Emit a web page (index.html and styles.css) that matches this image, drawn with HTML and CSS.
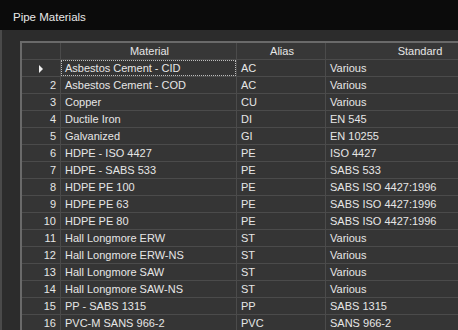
FILE: index.html
```html
<!DOCTYPE html>
<html lang="en">
<head>
    <meta charset="UTF-8">
    <title>Pipe Materials</title>
    <link rel="stylesheet" href="styles.css">
</head>
<body>
    <div class="window">
        <div class="titlebar">Pipe Materials</div>
        <div class="content">
            <table class="grid">
                <thead>
                    <tr>
                        <th class="rowhead"></th>
                        <th class="col-material">Material</th>
                        <th class="col-alias">Alias</th>
                        <th class="col-standard">Standard</th>
                    </tr>
                </thead>
                <tbody>
                    <tr class="current">
                        <td class="rowhead"><span class="arrow"></span></td>
                        <td class="cell-focus"><span class="focus">Asbestos Cement - CID</span></td>
                        <td>AC</td>
                        <td>Various</td>
                    </tr>
                    <tr><td class="rowhead">2</td><td>Asbestos Cement - COD</td><td>AC</td><td>Various</td></tr>
                    <tr><td class="rowhead">3</td><td>Copper</td><td>CU</td><td>Various</td></tr>
                    <tr><td class="rowhead">4</td><td>Ductile Iron</td><td>DI</td><td>EN 545</td></tr>
                    <tr><td class="rowhead">5</td><td>Galvanized</td><td>GI</td><td>EN 10255</td></tr>
                    <tr><td class="rowhead">6</td><td>HDPE - ISO 4427</td><td>PE</td><td>ISO 4427</td></tr>
                    <tr><td class="rowhead">7</td><td>HDPE - SABS 533</td><td>PE</td><td>SABS 533</td></tr>
                    <tr><td class="rowhead">8</td><td>HDPE PE 100</td><td>PE</td><td>SABS ISO 4427:1996</td></tr>
                    <tr><td class="rowhead">9</td><td>HDPE PE 63</td><td>PE</td><td>SABS ISO 4427:1996</td></tr>
                    <tr><td class="rowhead">10</td><td>HDPE PE 80</td><td>PE</td><td>SABS ISO 4427:1996</td></tr>
                    <tr><td class="rowhead">11</td><td>Hall Longmore ERW</td><td>ST</td><td>Various</td></tr>
                    <tr><td class="rowhead">12</td><td>Hall Longmore ERW-NS</td><td>ST</td><td>Various</td></tr>
                    <tr><td class="rowhead">13</td><td>Hall Longmore SAW</td><td>ST</td><td>Various</td></tr>
                    <tr><td class="rowhead">14</td><td>Hall Longmore SAW-NS</td><td>ST</td><td>Various</td></tr>
                    <tr><td class="rowhead">15</td><td>PP - SABS 1315</td><td>PP</td><td>SABS 1315</td></tr>
                    <tr><td class="rowhead">16</td><td>PVC-M SANS 966-2</td><td>PVC</td><td>SANS 966-2</td></tr>
                </tbody>
            </table>
        </div>
    </div>
</body>
</html>
```

FILE: styles.css
```css
/* Window */
body {
    margin: 0;
    padding: 0;
    background-color: #2b2b2b;
    font-family: 'Liberation Sans', Arial, sans-serif;
    overflow: hidden;
}

.window {
    width: 458px;
    height: 330px;
    display: flex;
    flex-direction: column;
}

.titlebar {
    height: 30px;
    box-sizing: border-box;
    background-color: #0b0b0b;
    color: #e8e8e8;
    font-size: 11.5px;
    line-height: 25px;
    padding: 5px 0 0 13px;
    flex-shrink: 0;
}

.content {
    flex: 1;
    background-color: #2c2c2c;
    border-left: 2px solid #4a4a4a;
    padding: 11px 0 0 18px;
    overflow: hidden;
}

/* Grid */
.grid {
    border-collapse: collapse;
    table-layout: fixed;
    width: 460px;
    border-top: 2px solid #6a6a6a;
    border-left: 2px solid #6a6a6a;
    font-size: 11px;
    color: #e6e6e6;
}

.grid th,
.grid td {
    height: 16px;
    padding: 0 2px 0 4px;
    border-right: 1px solid #4b4b4b;
    border-bottom: 1px solid #4b4b4b;
    white-space: nowrap;
    overflow: hidden;
    line-height: 16px;
}

.grid th {
    background-color: #373737;
    font-weight: normal;
    text-align: center;
}

.grid td {
    background-color: #353535;
}

.grid .rowhead {
    width: 31px;
    text-align: right;
    padding: 0 4px 0 3px;
    background-color: #353535;
}

.col-material {
    width: 169px;
}

.col-alias {
    width: 82px;
}

.col-standard {
    width: 180px;
}

.arrow {
    display: inline-block;
    width: 0;
    height: 0;
    border-top: 4px solid transparent;
    border-bottom: 4px solid transparent;
    border-left: 4px solid #f0f0f0;
    margin-right: 13px;
    vertical-align: -1px;
}

.grid .cell-focus {
    padding: 0;
}

.focus {
    display: block;
    padding: 0 0 0 3px;
    border: 1px dotted #bcbcbc;
    line-height: 14px;
}
```
